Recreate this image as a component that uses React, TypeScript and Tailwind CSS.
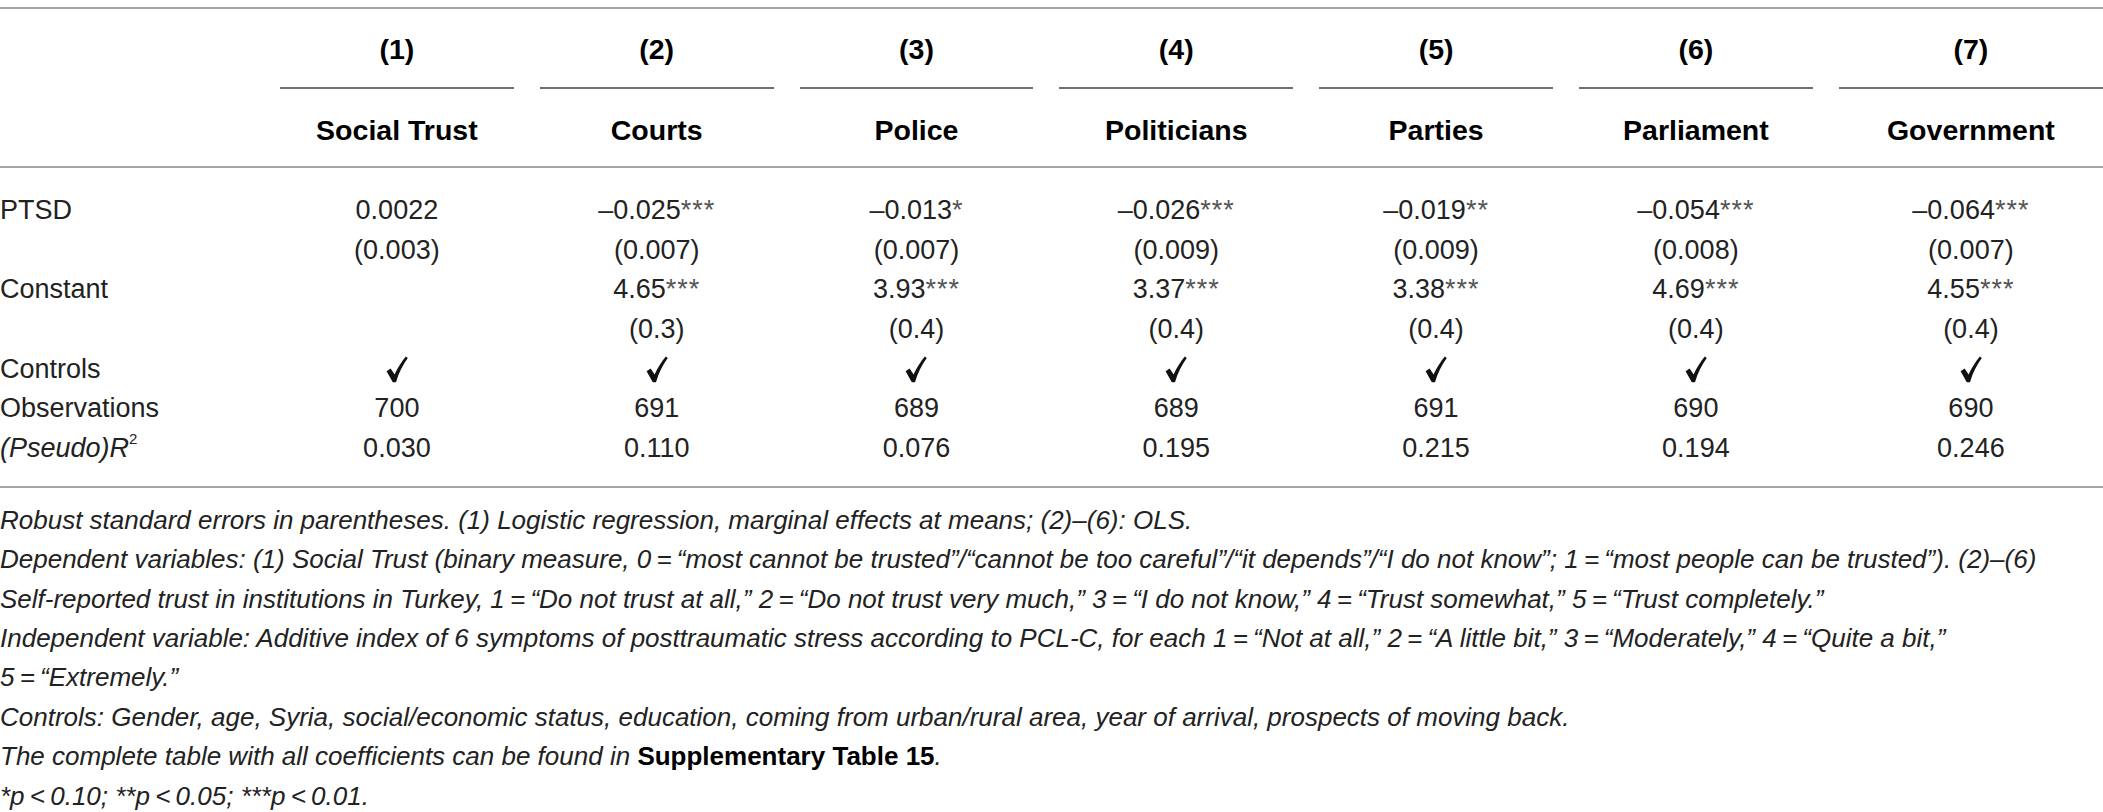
import React from 'react'

type Col = {
  n: string
  name: string
  ptsd: string
  ptsdStars: string
  ptsdSe: string
  cons: string
  consStars: string
  consSe: string
  obs: string
  r2: string
}

const cols: Col[] = [
  { n: '(1)', name: 'Social Trust', ptsd: '0.0022', ptsdStars: '', ptsdSe: '(0.003)', cons: '', consStars: '', consSe: '', obs: '700', r2: '0.030' },
  { n: '(2)', name: 'Courts', ptsd: '–0.025', ptsdStars: '***', ptsdSe: '(0.007)', cons: '4.65', consStars: '***', consSe: '(0.3)', obs: '691', r2: '0.110' },
  { n: '(3)', name: 'Police', ptsd: '–0.013', ptsdStars: '*', ptsdSe: '(0.007)', cons: '3.93', consStars: '***', consSe: '(0.4)', obs: '689', r2: '0.076' },
  { n: '(4)', name: 'Politicians', ptsd: '–0.026', ptsdStars: '***', ptsdSe: '(0.009)', cons: '3.37', consStars: '***', consSe: '(0.4)', obs: '689', r2: '0.195' },
  { n: '(5)', name: 'Parties', ptsd: '–0.019', ptsdStars: '**', ptsdSe: '(0.009)', cons: '3.38', consStars: '***', consSe: '(0.4)', obs: '691', r2: '0.215' },
  { n: '(6)', name: 'Parliament', ptsd: '–0.054', ptsdStars: '***', ptsdSe: '(0.008)', cons: '4.69', consStars: '***', consSe: '(0.4)', obs: '690', r2: '0.194' },
  { n: '(7)', name: 'Government', ptsd: '–0.064', ptsdStars: '***', ptsdSe: '(0.007)', cons: '4.55', consStars: '***', consSe: '(0.4)', obs: '690', r2: '0.246' },
]

const grid = 'grid grid-cols-[267px_repeat(6,259.8px)_1fr]'
const eq = '\u2009=\u2009'

function Stars({ s }: { s: string }) {
  if (!s) return null
  return <span className="text-[#555] tracking-[1px]">{s}</span>
}

function Row({ label, cells }: { label: React.ReactNode; cells: React.ReactNode[] }) {
  return (
    <div className={`${grid} h-[39.7px] items-center`}>
      <div className="whitespace-nowrap">{label}</div>
      {cells.map((c, i) => (
        <div key={i} className={`flex justify-center whitespace-nowrap ${i === 6 ? 'pl-[13px]' : 'px-[13px]'}`}>
          {c}
        </div>
      ))}
    </div>
  )
}

// calligraphic check mark like the one in the typeset table
function Check() {
  return (
    <svg width="22" height="27" viewBox="0 0 22 27" className="block">
      <path
        d="M0.6 15.2 L4.6 12.6 L8.6 18.6 C11.6 12 15.6 5.6 19.8 0.6 L21.8 2.1 C17 8.6 12.8 16.6 10 26.2 L6.8 26.2 Z"
        fill="#111"
      />
    </svg>
  )
}

export default function App() {
  return (
    <div className="w-[2103px] h-[812px] overflow-hidden bg-white font-['Liberation_Sans',Arial,sans-serif] text-[#222]">
      <div className="h-[7px]" />
      <div className="h-[2px] bg-[#a5a5a5]" />

      {/* header */}
      <div className={`${grid} font-bold text-black text-[28.5px]`}>
        <div />
        {cols.map((c, i) => (
          <div key={c.n} className={i === 6 ? 'pl-[13px]' : 'px-[13px]'}>
            <div className="h-[80px] pt-[3px] flex items-center justify-center border-b-2 border-[#707070]">{c.n}</div>
          </div>
        ))}
        <div />
        {cols.map((c, i) => (
          <div key={c.name} className={`h-[77px] pt-[6px] flex items-center justify-center whitespace-nowrap ${i === 6 ? 'pl-[13px]' : 'px-[13px]'}`}>
            {c.name}
          </div>
        ))}
      </div>
      <div className="h-[2px] bg-[#a5a5a5]" />

      {/* body */}
      <div className="pt-[22px] pb-[18px] text-[27px]">
        <Row
          label="PTSD"
          cells={cols.map((c) => (
            <span>
              {c.ptsd}
              <Stars s={c.ptsdStars} />
            </span>
          ))}
        />
        <Row label="" cells={cols.map((c) => c.ptsdSe)} />
        <Row
          label="Constant"
          cells={cols.map((c) => (
            <span>
              {c.cons}
              <Stars s={c.consStars} />
            </span>
          ))}
        />
        <Row label="" cells={cols.map((c) => c.consSe)} />
        <Row label="Controls" cells={cols.map(() => <Check />)} />
        <Row label="Observations" cells={cols.map((c) => c.obs)} />
        <Row
          label={
            <>
              <i>(Pseudo)R</i>
              <sup className="text-[15px] -top-[0.9em]">2</sup>
            </>
          }
          cells={cols.map((c) => c.r2)}
        />
      </div>
      <div className="h-[2px] bg-[#a5a5a5]" />

      {/* notes */}
      <div className="pt-[13px] italic text-[26px] leading-[39.4px] whitespace-nowrap">
        <div>Robust standard errors in parentheses. (1) Logistic regression, marginal effects at means; (2)–(6): OLS.</div>
        <div>
          Dependent variables: (1) Social Trust (binary measure, 0{eq}“most cannot be trusted”/“cannot be too careful”/“it depends”/“I do not know”; 1{eq}“most people can be trusted”). (2)–(6)
        </div>
        <div>
          Self-reported trust in institutions in Turkey, 1{eq}“Do not trust at all,” 2{eq}“Do not trust very much,” 3{eq}“I do not know,” 4{eq}“Trust somewhat,” 5{eq}“Trust completely.”
        </div>
        <div>
          Independent variable: Additive index of 6 symptoms of posttraumatic stress according to PCL-C, for each 1{eq}“Not at all,” 2{eq}“A little bit,” 3{eq}“Moderately,” 4{eq}“Quite a bit,”
        </div>
        <div>5{eq}“Extremely.”</div>
        <div>Controls: Gender, age, Syria, social/economic status, education, coming from urban/rural area, year of arrival, prospects of moving back.</div>
        <div>
          The complete table with all coefficients can be found in <span className="not-italic font-bold text-black">Supplementary Table 15</span>.
        </div>
        <div>*p{'\u2009'}&lt;{'\u2009'}0.10; **p{'\u2009'}&lt;{'\u2009'}0.05; ***p{'\u2009'}&lt;{'\u2009'}0.01.</div>
      </div>
    </div>
  )
}
